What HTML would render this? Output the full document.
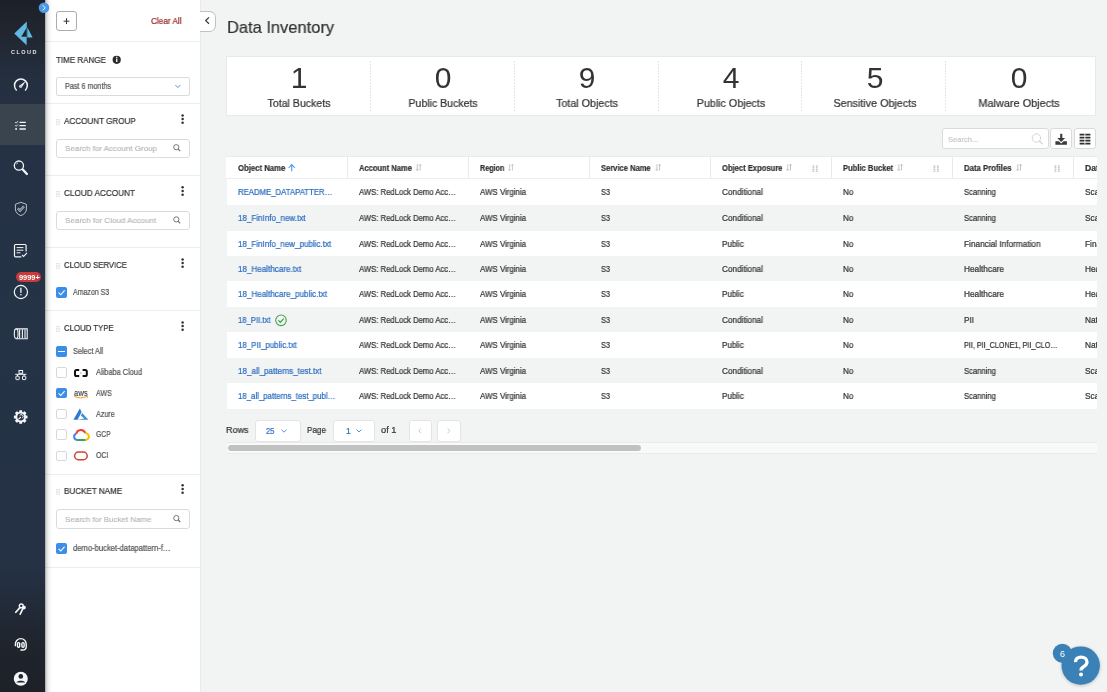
<!DOCTYPE html><html><head><meta charset="utf-8"><style>
*{box-sizing:border-box;margin:0;padding:0}
html,body{width:1107px;height:692px;overflow:hidden;background:#f2f3f3;font-family:"Liberation Sans",sans-serif;color:#333}
.t{position:absolute;line-height:1;white-space:nowrap;-webkit-text-stroke:0.22px currentColor;will-change:transform}
.r{position:absolute}
svg{position:absolute;overflow:visible}
.ic{display:inline-block;position:relative;vertical-align:baseline}
.ic svg{position:absolute;left:0;top:0}
</style></head><body>
<div class="r" style="left:0px;top:0px;width:45.00px;height:692.00px;background:linear-gradient(180deg,#1d2028 0px,#20262f 30px,#242f40 80px,#253245 150px,#253347 330px,#253246 560px,#222b39 605px,#1f242d 645px,#1d2027 692px)"></div>
<div class="r" style="left:0px;top:104.2px;width:45.00px;height:41.30px;background:#39444f"></div>
<svg style="left:0;top:0" width="45" height="60" viewBox="0 0 45 60">
<polygon points="14.3,33.4 26.8,21.6 26.6,45.2" fill="#63b8e3"/>
<polygon points="27.3,27.2 32.6,37.6 27.3,37.6" fill="#63b8e3"/>
<polygon points="21.3,36.8 26.6,27.8 26.6,36.8" fill="#1f242c"/>
</svg>
<div class="t" style="left:10.90px;top:50.23px;font-size:5.5px;font-weight:bold;color:#e6e8ea;letter-spacing:1.45px;-webkit-text-stroke:0">CLOUD</div>
<svg style="left:0;top:0" width="45" height="692">
<g fill="none" stroke="#f4f6f8" stroke-width="1.5" stroke-linecap="round">
 <path d="M16.3,89.9 A6.4,6.4 0 1 1 25.5,89.9"/>
</g>
<g stroke="#243042" stroke-width="0.9"><path d="M20.9,80.4 V81.4 M16.6,83.2 L17.4,83.7"/></g>
<polygon points="25.8,80.9 21.6,87.4 19.6,85.4" fill="#f4f6f8"/>
<circle cx="20.6" cy="86.4" r="1.4" fill="#f4f6f8"/>
<circle cx="21.0" cy="85.9" r="0.5" fill="#243042"/>
<g fill="none" stroke="#f4f6f8" stroke-width="1.3">
 <path d="M19.5,122.4 H25.8 M19.5,125.7 H25.8 M19.5,129.0 H25.8"/>
 <path d="M15.2,122.0 l1.0,1.1 l1.7,-1.9 M15.2,125.3 l1.0,1.1 l1.7,-1.9" stroke-width="0.9"/>
</g>
<rect x="15.2" y="128.2" width="1.8" height="1.6" fill="#f4f6f8"/>
<g fill="none" stroke="#f4f6f8">
 <circle cx="18.9" cy="165.6" r="4.6" stroke-width="1.3"/>
 <path d="M23.0,169.8 L26.9,174.0" stroke-width="2.3" stroke-linecap="round"/>
 <path d="M16.4,164.4 A2.8,2.8 0 0 1 18.2,162.6" stroke-width="0.7"/>
</g>
<g fill="none" stroke="#b9c0ca" stroke-width="1.0">
 <path d="M20.9,202.3 L26.4,204.3 V209 C26.4,212.3 24.0,214.5 20.9,215.6 C17.8,214.5 15.4,212.3 15.4,209 V204.3 Z"/>
 <path d="M17.8,208.4 L20.0,210.6 L24.0,206.4" stroke-width="2.3"/>
 <path d="M17.8,208.4 L20.0,210.6 L24.0,206.4" stroke="#253245" stroke-width="0.8"/>
</g>
<g fill="none" stroke="#f4f6f8" stroke-width="1.2">
 <path d="M21.4,256.9 H15.6 Q14.5,256.9 14.5,255.8 V245.6 Q14.5,244.5 15.6,244.5 H25.0 Q26.1,244.5 26.1,245.6 V251.6"/>
 <path d="M16.6,247.6 H23.4 M16.6,250.2 H23.4 M16.6,252.8 H20.4" stroke-width="1.0"/>
 <path d="M22.0,254.8 L23.6,256.4 L27.0,252.9" stroke-width="1.1"/>
</g>
<g fill="none" stroke="#f4f6f8" stroke-width="1.2">
 <circle cx="20.9" cy="292.0" r="6.6"/>
</g>
<rect x="20.25" y="287.7" width="1.3" height="5.2" fill="#f4f6f8"/>
<rect x="20.25" y="294.0" width="1.3" height="1.3" fill="#f4f6f8"/>
<g fill="none" stroke="#f4f6f8" stroke-width="1.1">
 <path d="M16.4,328.9 H27.2 V338.7 H16.4"/>
 <ellipse cx="16.2" cy="333.8" rx="1.9" ry="4.9"/>
 <path d="M19.6,329.6 V338 M22.4,329.6 V338 M25.0,329.6 V338"/>
</g>
<g fill="none" stroke="#f4f6f8" stroke-width="1.0">
 <rect x="19.0" y="370.5" width="3.6" height="2.8"/>
 <rect x="15.9" y="376.2" width="3.3" height="3.4" rx="0.5"/>
 <rect x="22.5" y="376.2" width="3.3" height="3.4" rx="0.5"/>
 <path d="M20.8,373.3 V374.3 M15.2,374.3 H26.4 M17.5,374.3 V376.2 M24.1,374.3 V376.2"/>
</g>
<g fill="#f4f6f8">
 <circle cx="20.7" cy="417.0" r="5.3"/>
 <g transform="translate(20.7,417.0)">
  <rect x="-1.5" y="-6.8" width="3" height="13.6" rx="0.6"/>
  <rect x="-1.5" y="-6.8" width="3" height="13.6" rx="0.6" transform="rotate(45)"/>
  <rect x="-1.5" y="-6.8" width="3" height="13.6" rx="0.6" transform="rotate(90)"/>
  <rect x="-1.5" y="-6.8" width="3" height="13.6" rx="0.6" transform="rotate(135)"/>
 </g>
 <circle cx="20.7" cy="417.0" r="3.4" fill="#253347"/>
 <path d="M18.4,419.4 L20.8,417.0" stroke="#f4f6f8" stroke-width="1.2"/>
 <path d="M19.6,415.6 A1.9,1.9 0 1 1 22.2,418.2" fill="none" stroke="#f4f6f8" stroke-width="1.0"/>
</g>
<circle cx="23.8" cy="607.6" r="2.0" fill="#f4f6f8"/>
<g fill="none" stroke="#f4f6f8" stroke-width="1.7" stroke-linecap="round">
 <circle cx="21.3" cy="605.9" r="1.9" stroke-width="1.5"/>
 <path d="M19.9,607.6 L15.8,612.3 M22.6,609.2 L20.2,614.2"/>
</g>
<circle cx="21.3" cy="605.9" r="0.9" fill="#1f252e"/>
<g fill="none" stroke="#f4f6f8" stroke-width="1.4">
 <path d="M15.4,646.2 V644.0 A5.4,5.4 0 0 1 26.2,644.0 V647.0 C26.2,649.2 25,650 22.4,650 H20.4"/>
 <rect x="17.5" y="642.6" width="2.2" height="4.6" rx="1"/>
 <rect x="21.9" y="642.6" width="2.2" height="4.6" rx="1"/>
</g>
<circle cx="20.8" cy="678.7" r="7" fill="#f4f6f8"/>
<circle cx="20.8" cy="676.4" r="2.3" fill="#1f232c"/>
<path d="M16.4,682.6 C17.4,680.2 24.2,680.2 25.2,682.6 Z" fill="#1f232c"/>
</svg>
<div class="r" style="left:16.1px;top:271.9px;width:25.30px;height:10.20px;background:#c93b3b;border-radius:5px"></div>
<div class="t" style="left:18.50px;top:273.78px;font-size:7.2px;font-weight:bold;transform:scaleX(1.0286);transform-origin:0 0;color:#fff;-webkit-text-stroke:0">9999+</div>
<div class="r" style="left:45px;top:0px;width:156.00px;height:692.00px;background:#fff;border-right:1px solid #e9ebeb"></div>
<div class="r" style="left:56.3px;top:10.8px;width:20.50px;height:20.70px;border:1px solid #a9adad;border-radius:3px;background:#fff"></div>
<svg style="left:0;top:0" width="200" height="40"><path d="M66.5,18.3 V24.1 M63.6,21.2 H69.4" stroke="#333" stroke-width="1"/></svg>
<div class="t" style="left:151.00px;top:17.42px;font-size:8.8px;transform:scaleX(0.9333);transform-origin:0 0;color:#9a2a2a">Clear All</div>
<div class="r" style="left:200px;top:10.5px;width:15.80px;height:21.10px;border:1px solid #bfc2c2;border-left:none;border-radius:0 6.5px 6.5px 0;background:#fff"></div>
<svg style="left:0;top:0" width="230" height="40"><path d="M209.0,17.4 L205.7,20.6 L209.0,23.8" fill="none" stroke="#333" stroke-width="1.2"/></svg>
<div class="r" style="left:45px;top:41px;width:155.00px;height:1.00px;background:#eceeee"></div>
<div class="t" style="left:56.30px;top:55.95px;font-size:9.0px;transform:scaleX(0.8911);transform-origin:0 0;color:#333">TIME RANGE</div>
<svg style="left:0;top:0" width="200" height="100"><circle cx="116.7" cy="59.8" r="4.1" fill="#2b2b2b"/><rect x="116.1" y="58.6" width="1.3" height="3.4" fill="#fff"/><rect x="116.1" y="56.8" width="1.3" height="1.2" fill="#fff"/></svg>
<div class="r" style="left:56.3px;top:77.2px;width:133.40px;height:18.60px;border:1px solid #d9dcdc;border-radius:2px;background:#fff"></div>
<div class="t" style="left:64.70px;top:82.63px;font-size:8.2px;transform:scaleX(0.8792);transform-origin:0 0;color:#555">Past 6 months</div>
<svg style="left:0;top:0" width="200" height="100"><path d="M175.4,85 L177.9,87.6 L180.4,85" fill="none" stroke="#3f86d9" stroke-width="0.9"/></svg>
<div class="r" style="left:45px;top:103px;width:155.00px;height:1.00px;background:#eceeee"></div>
<div class="t" style="left:63.80px;top:117.05px;font-size:9.0px;transform:scaleX(0.9000);transform-origin:0 0;color:#333">ACCOUNT GROUP</div><svg style="left:0;top:0" width="200" height="692"><rect x="56.4" y="119.10" width="1.0" height="1.0" fill="#c8c8c8"/><rect x="56.4" y="120.70" width="1.0" height="1.0" fill="#c8c8c8"/><rect x="56.4" y="122.30" width="1.0" height="1.0" fill="#c8c8c8"/><rect x="56.4" y="123.90" width="1.0" height="1.0" fill="#c8c8c8"/><rect x="58.6" y="119.10" width="1.0" height="1.0" fill="#c8c8c8"/><rect x="58.6" y="120.70" width="1.0" height="1.0" fill="#c8c8c8"/><rect x="58.6" y="122.30" width="1.0" height="1.0" fill="#c8c8c8"/><rect x="58.6" y="123.90" width="1.0" height="1.0" fill="#c8c8c8"/></svg><svg style="left:0;top:0" width="200" height="692"><circle cx="182.6" cy="115.40" r="1.25" fill="#333"/><circle cx="182.6" cy="119.10" r="1.25" fill="#333"/><circle cx="182.6" cy="122.80" r="1.25" fill="#333"/></svg>
<div class="r" style="left:56.3px;top:138.5px;width:133.40px;height:19.20px;border:1px solid #d9dcdc;border-radius:3px;background:#fff"></div><div class="t" style="left:64.60px;top:145.02px;font-size:8.1px;transform:scaleX(0.9862);transform-origin:0 0;color:#b8bbbb">Search for Account Group</div><svg style="left:0;top:0" width="200" height="692"><circle cx="176.3" cy="147.20" r="2.6" fill="none" stroke="#666" stroke-width="0.9"/><path d="M178.2,149.10 L180.2,151.10" stroke="#666" stroke-width="1.1"/></svg>
<div class="r" style="left:45px;top:175px;width:155.00px;height:1.00px;background:#eceeee"></div>
<div class="t" style="left:63.80px;top:188.95px;font-size:9.0px;transform:scaleX(0.9103);transform-origin:0 0;color:#333">CLOUD ACCOUNT</div><svg style="left:0;top:0" width="200" height="692"><rect x="56.4" y="191.00" width="1.0" height="1.0" fill="#c8c8c8"/><rect x="56.4" y="192.60" width="1.0" height="1.0" fill="#c8c8c8"/><rect x="56.4" y="194.20" width="1.0" height="1.0" fill="#c8c8c8"/><rect x="56.4" y="195.80" width="1.0" height="1.0" fill="#c8c8c8"/><rect x="58.6" y="191.00" width="1.0" height="1.0" fill="#c8c8c8"/><rect x="58.6" y="192.60" width="1.0" height="1.0" fill="#c8c8c8"/><rect x="58.6" y="194.20" width="1.0" height="1.0" fill="#c8c8c8"/><rect x="58.6" y="195.80" width="1.0" height="1.0" fill="#c8c8c8"/></svg><svg style="left:0;top:0" width="200" height="692"><circle cx="182.6" cy="187.30" r="1.25" fill="#333"/><circle cx="182.6" cy="191.00" r="1.25" fill="#333"/><circle cx="182.6" cy="194.70" r="1.25" fill="#333"/></svg>
<div class="r" style="left:56.3px;top:210.7px;width:133.40px;height:19.20px;border:1px solid #d9dcdc;border-radius:3px;background:#fff"></div><div class="t" style="left:64.60px;top:217.22px;font-size:8.1px;transform:scaleX(0.9935);transform-origin:0 0;color:#b8bbbb">Search for Cloud Account</div><svg style="left:0;top:0" width="200" height="692"><circle cx="176.3" cy="219.40" r="2.6" fill="none" stroke="#666" stroke-width="0.9"/><path d="M178.2,221.30 L180.2,223.30" stroke="#666" stroke-width="1.1"/></svg>
<div class="r" style="left:45px;top:247px;width:155.00px;height:1.00px;background:#eceeee"></div>
<div class="t" style="left:63.80px;top:261.05px;font-size:9.0px;transform:scaleX(0.8581);transform-origin:0 0;color:#333">CLOUD SERVICE</div><svg style="left:0;top:0" width="200" height="692"><rect x="56.4" y="263.10" width="1.0" height="1.0" fill="#c8c8c8"/><rect x="56.4" y="264.70" width="1.0" height="1.0" fill="#c8c8c8"/><rect x="56.4" y="266.30" width="1.0" height="1.0" fill="#c8c8c8"/><rect x="56.4" y="267.90" width="1.0" height="1.0" fill="#c8c8c8"/><rect x="58.6" y="263.10" width="1.0" height="1.0" fill="#c8c8c8"/><rect x="58.6" y="264.70" width="1.0" height="1.0" fill="#c8c8c8"/><rect x="58.6" y="266.30" width="1.0" height="1.0" fill="#c8c8c8"/><rect x="58.6" y="267.90" width="1.0" height="1.0" fill="#c8c8c8"/></svg><svg style="left:0;top:0" width="200" height="692"><circle cx="182.6" cy="259.40" r="1.25" fill="#333"/><circle cx="182.6" cy="263.10" r="1.25" fill="#333"/><circle cx="182.6" cy="266.80" r="1.25" fill="#333"/></svg>
<div class="r" style="left:56.1px;top:287px;width:10.90px;height:10.80px;background:#3b8ee8;border-radius:2px"></div><svg style="left:0;top:0" width="200" height="692"><path d="M58.6,292.60 L60.8,294.80 L64.6,290.40" fill="none" stroke="#fff" stroke-width="1.1"/></svg>
<div class="t" style="left:72.90px;top:289.03px;font-size:8.2px;transform:scaleX(0.8558);transform-origin:0 0;color:#555">Amazon S3</div>
<div class="r" style="left:45px;top:310px;width:155.00px;height:1.00px;background:#eceeee"></div>
<div class="t" style="left:63.80px;top:324.05px;font-size:9.0px;transform:scaleX(0.8672);transform-origin:0 0;color:#333">CLOUD TYPE</div><svg style="left:0;top:0" width="200" height="692"><rect x="56.4" y="326.10" width="1.0" height="1.0" fill="#c8c8c8"/><rect x="56.4" y="327.70" width="1.0" height="1.0" fill="#c8c8c8"/><rect x="56.4" y="329.30" width="1.0" height="1.0" fill="#c8c8c8"/><rect x="56.4" y="330.90" width="1.0" height="1.0" fill="#c8c8c8"/><rect x="58.6" y="326.10" width="1.0" height="1.0" fill="#c8c8c8"/><rect x="58.6" y="327.70" width="1.0" height="1.0" fill="#c8c8c8"/><rect x="58.6" y="329.30" width="1.0" height="1.0" fill="#c8c8c8"/><rect x="58.6" y="330.90" width="1.0" height="1.0" fill="#c8c8c8"/></svg><svg style="left:0;top:0" width="200" height="692"><circle cx="182.6" cy="322.40" r="1.25" fill="#333"/><circle cx="182.6" cy="326.10" r="1.25" fill="#333"/><circle cx="182.6" cy="329.80" r="1.25" fill="#333"/></svg>
<div class="r" style="left:56.1px;top:346.3px;width:10.90px;height:10.80px;background:#3b8ee8;border-radius:2px"></div><div class="r" style="left:58.4px;top:351.2px;width:6.30px;height:1.10px;background:#fff"></div>
<div class="t" style="left:72.90px;top:348.23px;font-size:8.2px;transform:scaleX(0.8971);transform-origin:0 0;color:#555">Select All</div>
<div class="r" style="left:56.1px;top:367.1px;width:10.90px;height:10.80px;border:1px solid #d6d9d9;border-radius:2px;background:#fff"></div>
<div class="t" style="left:96.30px;top:369.03px;font-size:8.2px;transform:scaleX(0.9039);transform-origin:0 0;color:#555">Alibaba Cloud</div>
<div class="r" style="left:56.1px;top:387.7px;width:10.90px;height:10.80px;background:#3b8ee8;border-radius:2px"></div><svg style="left:0;top:0" width="200" height="692"><path d="M58.6,393.30 L60.8,395.50 L64.6,391.10" fill="none" stroke="#fff" stroke-width="1.1"/></svg>
<div class="t" style="left:96.30px;top:389.63px;font-size:8.2px;transform:scaleX(0.8579);transform-origin:0 0;color:#555">AWS</div>
<div class="r" style="left:56.1px;top:408.6px;width:10.90px;height:10.80px;border:1px solid #d6d9d9;border-radius:2px;background:#fff"></div>
<div class="t" style="left:96.30px;top:410.53px;font-size:8.2px;transform:scaleX(0.8773);transform-origin:0 0;color:#555">Azure</div>
<div class="r" style="left:56.1px;top:429.4px;width:10.90px;height:10.80px;border:1px solid #d6d9d9;border-radius:2px;background:#fff"></div>
<div class="t" style="left:96.30px;top:431.33px;font-size:8.2px;transform:scaleX(0.8278);transform-origin:0 0;color:#555">GCP</div>
<div class="r" style="left:56.1px;top:450.5px;width:10.90px;height:10.80px;border:1px solid #d6d9d9;border-radius:2px;background:#fff"></div>
<div class="t" style="left:96.30px;top:452.43px;font-size:8.2px;transform:scaleX(0.8600);transform-origin:0 0;color:#555">OCI</div>
<svg style="left:0;top:0" width="200" height="692"><path d="M79.2,370.00 H76.6 Q75.0,370.00 75.0,371.60 V374.40 Q75.0,376.00 76.6,376.00 H79.2 M82.6,370.00 H85.2 Q86.8,370.00 86.8,371.60 V374.40 Q86.8,376.00 85.2,376.00 H82.6" fill="none" stroke="#111" stroke-width="2.0"/><path d="M80.0,373.00 H81.8" stroke="#777" stroke-width="0.6"/></svg>
<div class="t" style="left:73.80px;top:387.71px;font-size:9.4px;transform:scaleX(0.8235);transform-origin:0 0;color:#333;-webkit-text-stroke:0.1px #333">aws</div>
<svg style="left:0;top:0" width="200" height="692"><path d="M74.4,396.70 Q80.5,399.30 87.4,396.50" fill="none" stroke="#f29b1d" stroke-width="1.0"/><path d="M85.8,395.90 L87.8,396.30 L87.2,398.10" fill="none" stroke="#f29b1d" stroke-width="0.8"/></svg>
<svg style="left:0;top:0" width="200" height="692"><path d="M79.8,408.40 L73.4,419.80 H77.6 L81.6,412.00 Z" fill="#2f7ad0"/><path d="M82.2,413.00 L88.4,419.80 H77.4 L84.2,418.40 L80.8,415.40 Z" fill="#3b8fdc"/></svg>
<svg style="left:0;top:0" width="200" height="692"><path d="M77.0,440.00 A3.2,3.2 0 0 1 76.2,433.80" fill="none" stroke="#4285f4" stroke-width="2"/><path d="M76.2,433.80 A4.8,4.8 0 0 1 85.4,433.20" fill="none" stroke="#ea4335" stroke-width="2"/><path d="M85.4,433.20 A3.4,3.4 0 0 1 85.6,440.00" fill="none" stroke="#fbbc04" stroke-width="2"/><path d="M85.6,440.00 H77.0" fill="none" stroke="#34a853" stroke-width="2"/></svg>
<svg style="left:0;top:0" width="200" height="692"><rect x="74.6" y="452.10" width="12.6" height="7.6" rx="3.8" fill="none" stroke="#c74634" stroke-width="1.5"/></svg>
<div class="r" style="left:45px;top:473.5px;width:155.00px;height:1.00px;background:#eceeee"></div>
<div class="t" style="left:63.80px;top:486.95px;font-size:9.0px;transform:scaleX(0.8985);transform-origin:0 0;color:#333">BUCKET NAME</div><svg style="left:0;top:0" width="200" height="692"><rect x="56.4" y="489.00" width="1.0" height="1.0" fill="#c8c8c8"/><rect x="56.4" y="490.60" width="1.0" height="1.0" fill="#c8c8c8"/><rect x="56.4" y="492.20" width="1.0" height="1.0" fill="#c8c8c8"/><rect x="56.4" y="493.80" width="1.0" height="1.0" fill="#c8c8c8"/><rect x="58.6" y="489.00" width="1.0" height="1.0" fill="#c8c8c8"/><rect x="58.6" y="490.60" width="1.0" height="1.0" fill="#c8c8c8"/><rect x="58.6" y="492.20" width="1.0" height="1.0" fill="#c8c8c8"/><rect x="58.6" y="493.80" width="1.0" height="1.0" fill="#c8c8c8"/></svg><svg style="left:0;top:0" width="200" height="692"><circle cx="182.6" cy="485.30" r="1.25" fill="#333"/><circle cx="182.6" cy="489.00" r="1.25" fill="#333"/><circle cx="182.6" cy="492.70" r="1.25" fill="#333"/></svg>
<div class="r" style="left:56.3px;top:509.4px;width:133.40px;height:19.20px;border:1px solid #d9dcdc;border-radius:3px;background:#fff"></div><div class="t" style="left:64.60px;top:515.91px;font-size:8.1px;transform:scaleX(0.9807);transform-origin:0 0;color:#b8bbbb">Search for Bucket Name</div><svg style="left:0;top:0" width="200" height="692"><circle cx="176.3" cy="518.10" r="2.6" fill="none" stroke="#666" stroke-width="0.9"/><path d="M178.2,520.00 L180.2,522.00" stroke="#666" stroke-width="1.1"/></svg>
<div class="r" style="left:56.1px;top:543.2px;width:10.90px;height:10.80px;background:#3b8ee8;border-radius:2px"></div><svg style="left:0;top:0" width="200" height="692"><path d="M58.6,548.80 L60.8,551.00 L64.6,546.60" fill="none" stroke="#fff" stroke-width="1.1"/></svg>
<div class="t" style="left:72.90px;top:545.23px;font-size:8.2px;transform:scaleX(0.9317);transform-origin:0 0;color:#555">demo-bucket-datapattern-f…</div>
<div class="r" style="left:45px;top:566.5px;width:155.00px;height:1.00px;background:#eceeee"></div>
<div class="r" style="left:45px;top:0px;width:7.00px;height:692.00px;background:linear-gradient(90deg,rgba(0,0,0,0.38),rgba(0,0,0,0.16) 20%,rgba(0,0,0,0.05) 55%,rgba(0,0,0,0))"></div>
<svg style="left:0;top:0" width="60" height="20"><circle cx="44" cy="7.8" r="5.3" fill="#4a98e6"/>
<path d="M42.8,5.2 L45.2,7.8 L42.8,10.4" fill="none" stroke="#fff" stroke-width="0.9"/></svg>
<div class="t" style="left:226.50px;top:18.95px;font-size:17px;transform:scaleX(0.9685);transform-origin:0 0;color:#333">Data Inventory</div>
<div class="r" style="left:225.6px;top:55.5px;width:870.60px;height:60.90px;background:#fff;border:1px solid #e8eaea"></div>
<div class="t" style="left:148.50px;width:300px;text-align:center;top:63.30px;font-size:30px;color:#333;-webkit-text-stroke:0">1</div>
<div class="t" style="left:148.50px;width:300px;text-align:center;top:97.85px;font-size:11px;transform:scaleX(0.9621);transform-origin:50% 0;color:#333">Total Buckets</div>
<div class="t" style="left:292.50px;width:300px;text-align:center;top:63.30px;font-size:30px;color:#333;-webkit-text-stroke:0">0</div>
<div class="t" style="left:292.50px;width:300px;text-align:center;top:97.85px;font-size:11px;transform:scaleX(0.9575);transform-origin:50% 0;color:#333">Public Buckets</div>
<div class="r" style="left:369.70000000000005px;top:61px;width:1.00px;height:50.00px;background:repeating-linear-gradient(180deg,#e4e6e6 0 1.6px,rgba(255,255,255,0) 1.6px 3px)"></div>
<div class="t" style="left:436.50px;width:300px;text-align:center;top:63.30px;font-size:30px;color:#333;-webkit-text-stroke:0">9</div>
<div class="t" style="left:436.50px;width:300px;text-align:center;top:97.85px;font-size:11px;transform:scaleX(0.9750);transform-origin:50% 0;color:#333">Total Objects</div>
<div class="r" style="left:513.6px;top:61px;width:1.00px;height:50.00px;background:repeating-linear-gradient(180deg,#e4e6e6 0 1.6px,rgba(255,255,255,0) 1.6px 3px)"></div>
<div class="t" style="left:580.50px;width:300px;text-align:center;top:63.30px;font-size:30px;color:#333;-webkit-text-stroke:0">4</div>
<div class="t" style="left:580.50px;width:300px;text-align:center;top:97.85px;font-size:11px;transform:scaleX(0.9732);transform-origin:50% 0;color:#333">Public Objects</div>
<div class="r" style="left:657.5px;top:61px;width:1.00px;height:50.00px;background:repeating-linear-gradient(180deg,#e4e6e6 0 1.6px,rgba(255,255,255,0) 1.6px 3px)"></div>
<div class="t" style="left:724.50px;width:300px;text-align:center;top:63.30px;font-size:30px;color:#333;-webkit-text-stroke:0">5</div>
<div class="t" style="left:724.50px;width:300px;text-align:center;top:97.85px;font-size:11px;transform:scaleX(0.9776);transform-origin:50% 0;color:#333">Sensitive Objects</div>
<div class="r" style="left:801.4000000000001px;top:61px;width:1.00px;height:50.00px;background:repeating-linear-gradient(180deg,#e4e6e6 0 1.6px,rgba(255,255,255,0) 1.6px 3px)"></div>
<div class="t" style="left:868.50px;width:300px;text-align:center;top:63.30px;font-size:30px;color:#333;-webkit-text-stroke:0">0</div>
<div class="t" style="left:868.50px;width:300px;text-align:center;top:97.85px;font-size:11px;transform:scaleX(0.9890);transform-origin:50% 0;color:#333">Malware Objects</div>
<div class="r" style="left:945.3px;top:61px;width:1.00px;height:50.00px;background:repeating-linear-gradient(180deg,#e4e6e6 0 1.6px,rgba(255,255,255,0) 1.6px 3px)"></div>
<div class="r" style="left:942.2px;top:128.4px;width:106.40px;height:21.00px;background:#fff;border:1px solid #d9dbdb;border-radius:3px"></div>
<div class="t" style="left:947.80px;top:135.94px;font-size:7.6px;color:#c8cbcb">Search...</div>
<svg style="left:0;top:0" width="1107" height="692"><circle cx="1036.4" cy="138.0" r="4.2" fill="none" stroke="#d3d5d5" stroke-width="1"/><path d="M1039.4,141.0 L1042.6,144.2" stroke="#d3d5d5" stroke-width="1.3"/></svg>
<div class="r" style="left:1049.8px;top:128.4px;width:22.40px;height:21.00px;background:#fff;border:1px solid #d9dbdb;border-radius:3px"></div>
<div class="r" style="left:1073.8px;top:128.4px;width:22.60px;height:21.00px;background:#fff;border:1px solid #d9dbdb;border-radius:3px"></div>
<svg style="left:0;top:0" width="1107" height="692">
<rect x="1060.2" y="133.8" width="2.1" height="4.8" fill="#3a3a3a"/>
<polygon points="1057.3,138.0 1065.1,138.0 1061.2,142.0" fill="#3a3a3a"/>
<path d="M1055.4,141.2 H1058.8 L1061.2,143.4 L1063.6,141.2 H1066.9 V144.7 H1055.4 Z" fill="#3a3a3a"/>
<path d="M1079.6,134.6 H1090.4 M1079.6,137.6 H1090.4 M1079.6,140.6 H1090.4 M1079.6,143.6 H1090.4" stroke="#2e2e2e" stroke-width="1.6"/>
<path d="M1084.9,133.6 V144.6" stroke="#fff" stroke-width="0.9"/>
</svg>
<div class="r" style="left:226px;top:156px;width:871.00px;height:23.00px;background:#fff;border-top:1px solid #e9ebeb;border-bottom:1px solid #eceeee"></div>
<div class="r" style="left:346.7px;top:157px;width:1.00px;height:21.00px;background:#e9ebeb"></div>
<div class="r" style="left:467.7px;top:157px;width:1.00px;height:21.00px;background:#e9ebeb"></div>
<div class="r" style="left:588.7px;top:157px;width:1.00px;height:21.00px;background:#e9ebeb"></div>
<div class="r" style="left:709.7px;top:157px;width:1.00px;height:21.00px;background:#e9ebeb"></div>
<div class="r" style="left:830.7px;top:157px;width:1.00px;height:21.00px;background:#e9ebeb"></div>
<div class="r" style="left:951.7px;top:157px;width:1.00px;height:21.00px;background:#e9ebeb"></div>
<div class="r" style="left:1072.7px;top:157px;width:1.00px;height:21.00px;background:#e9ebeb"></div>
<div class="t" style="left:237.90px;top:164.19px;font-size:8.6px;font-weight:bold;transform:scaleX(0.9000);transform-origin:0 0;color:#333">Object Name<span class="ic" style="width:7.4px;height:7px;margin-left:3.6px"><svg width="8" height="8" style="top:0.2px"><path d="M3.7,7.2 V0.8 M0.4,3.9 L3.7,0.6 L7,3.9" fill="none" stroke="#4a98ee" stroke-width="1.15"/></svg></span></div>
<div class="t" style="left:358.90px;top:164.19px;font-size:8.6px;font-weight:bold;transform:scaleX(0.8787);transform-origin:0 0;color:#333">Account Name<span class="ic" style="width:6px;height:7px;margin-left:5.2px"><svg width="8" height="8" style="top:0.2px"><path d="M1.3,0.2 V6.6 M0,5.2 L1.3,6.6 L2.6,5.2 M4.5,6.6 V0.2 M3.2,1.6 L4.5,0.2 L5.8,1.6" fill="none" stroke="#b8baba" stroke-width="0.95"/></svg></span></div>
<div class="t" style="left:479.90px;top:164.19px;font-size:8.6px;font-weight:bold;transform:scaleX(0.8379);transform-origin:0 0;color:#333">Region<span class="ic" style="width:6px;height:7px;margin-left:5.2px"><svg width="8" height="8" style="top:0.2px"><path d="M1.3,0.2 V6.6 M0,5.2 L1.3,6.6 L2.6,5.2 M4.5,6.6 V0.2 M3.2,1.6 L4.5,0.2 L5.8,1.6" fill="none" stroke="#b8baba" stroke-width="0.95"/></svg></span></div>
<div class="t" style="left:600.90px;top:164.19px;font-size:8.6px;font-weight:bold;transform:scaleX(0.8807);transform-origin:0 0;color:#333">Service Name<span class="ic" style="width:6px;height:7px;margin-left:5.2px"><svg width="8" height="8" style="top:0.2px"><path d="M1.3,0.2 V6.6 M0,5.2 L1.3,6.6 L2.6,5.2 M4.5,6.6 V0.2 M3.2,1.6 L4.5,0.2 L5.8,1.6" fill="none" stroke="#b8baba" stroke-width="0.95"/></svg></span></div>
<div class="t" style="left:721.90px;top:164.19px;font-size:8.6px;font-weight:bold;transform:scaleX(0.8841);transform-origin:0 0;color:#333">Object Exposure<span class="ic" style="width:6px;height:7px;margin-left:5.2px"><svg width="8" height="8" style="top:0.2px"><path d="M1.3,0.2 V6.6 M0,5.2 L1.3,6.6 L2.6,5.2 M4.5,6.6 V0.2 M3.2,1.6 L4.5,0.2 L5.8,1.6" fill="none" stroke="#b8baba" stroke-width="0.95"/></svg></span></div>
<svg style="left:0;top:0" width="1107" height="692"><rect x="812.50" y="165.20" width="1.8" height="1.4" fill="#c6c8c8"/><rect x="812.50" y="167.00" width="1.8" height="1.4" fill="#c6c8c8"/><rect x="812.50" y="168.80" width="1.8" height="1.4" fill="#c6c8c8"/><rect x="812.50" y="170.60" width="1.8" height="1.4" fill="#c6c8c8"/><rect x="815.90" y="165.20" width="1.8" height="1.4" fill="#c6c8c8"/><rect x="815.90" y="167.00" width="1.8" height="1.4" fill="#c6c8c8"/><rect x="815.90" y="168.80" width="1.8" height="1.4" fill="#c6c8c8"/><rect x="815.90" y="170.60" width="1.8" height="1.4" fill="#c6c8c8"/></svg>
<div class="t" style="left:842.90px;top:164.19px;font-size:8.6px;font-weight:bold;transform:scaleX(0.8807);transform-origin:0 0;color:#333">Public Bucket<span class="ic" style="width:6px;height:7px;margin-left:5.2px"><svg width="8" height="8" style="top:0.2px"><path d="M1.3,0.2 V6.6 M0,5.2 L1.3,6.6 L2.6,5.2 M4.5,6.6 V0.2 M3.2,1.6 L4.5,0.2 L5.8,1.6" fill="none" stroke="#b8baba" stroke-width="0.95"/></svg></span></div>
<svg style="left:0;top:0" width="1107" height="692"><rect x="933.50" y="165.20" width="1.8" height="1.4" fill="#c6c8c8"/><rect x="933.50" y="167.00" width="1.8" height="1.4" fill="#c6c8c8"/><rect x="933.50" y="168.80" width="1.8" height="1.4" fill="#c6c8c8"/><rect x="933.50" y="170.60" width="1.8" height="1.4" fill="#c6c8c8"/><rect x="936.90" y="165.20" width="1.8" height="1.4" fill="#c6c8c8"/><rect x="936.90" y="167.00" width="1.8" height="1.4" fill="#c6c8c8"/><rect x="936.90" y="168.80" width="1.8" height="1.4" fill="#c6c8c8"/><rect x="936.90" y="170.60" width="1.8" height="1.4" fill="#c6c8c8"/></svg>
<div class="t" style="left:963.90px;top:164.19px;font-size:8.6px;font-weight:bold;transform:scaleX(0.9057);transform-origin:0 0;color:#333">Data Profiles<span class="ic" style="width:6px;height:7px;margin-left:5.2px"><svg width="8" height="8" style="top:0.2px"><path d="M1.3,0.2 V6.6 M0,5.2 L1.3,6.6 L2.6,5.2 M4.5,6.6 V0.2 M3.2,1.6 L4.5,0.2 L5.8,1.6" fill="none" stroke="#b8baba" stroke-width="0.95"/></svg></span></div>
<svg style="left:0;top:0" width="1107" height="692"><rect x="1054.50" y="165.20" width="1.8" height="1.4" fill="#c6c8c8"/><rect x="1054.50" y="167.00" width="1.8" height="1.4" fill="#c6c8c8"/><rect x="1054.50" y="168.80" width="1.8" height="1.4" fill="#c6c8c8"/><rect x="1054.50" y="170.60" width="1.8" height="1.4" fill="#c6c8c8"/><rect x="1057.90" y="165.20" width="1.8" height="1.4" fill="#c6c8c8"/><rect x="1057.90" y="167.00" width="1.8" height="1.4" fill="#c6c8c8"/><rect x="1057.90" y="168.80" width="1.8" height="1.4" fill="#c6c8c8"/><rect x="1057.90" y="170.60" width="1.8" height="1.4" fill="#c6c8c8"/></svg>
<div class="t" style="left:1084.90px;top:164.19px;font-size:8.6px;font-weight:bold;color:#333">Data Patterns</div>
<div class="r" style="left:226.5px;top:178.5px;width:870.50px;height:26.50px;background:#fff"></div>
<div class="t" style="left:237.80px;top:188.09px;font-size:8.3px;transform:scaleX(0.9360);transform-origin:0 0;color:#2b6cc0">README_DATAPATTER…</div>
<div class="t" style="left:358.80px;top:188.09px;font-size:8.3px;transform:scaleX(0.9279);transform-origin:0 0;color:#333">AWS: RedLock Demo Acc…</div>
<div class="t" style="left:479.80px;top:188.09px;font-size:8.3px;transform:scaleX(0.9510);transform-origin:0 0;color:#333">AWS Virginia</div>
<div class="t" style="left:600.80px;top:188.09px;font-size:8.3px;transform:scaleX(0.9000);transform-origin:0 0;color:#333">S3</div>
<div class="t" style="left:721.80px;top:188.09px;font-size:8.3px;transform:scaleX(0.9857);transform-origin:0 0;color:#333">Conditional</div>
<div class="t" style="left:842.80px;top:188.09px;font-size:8.3px;transform:scaleX(0.9727);transform-origin:0 0;color:#333">No</div>
<div class="t" style="left:963.80px;top:188.09px;font-size:8.3px;transform:scaleX(0.9200);transform-origin:0 0;color:#333">Scanning</div>
<div class="t" style="left:1084.80px;top:188.09px;font-size:8.3px;color:#333">Scanning</div>
<div class="t" style="left:237.80px;top:214.09px;font-size:8.3px;transform:scaleX(0.9700);transform-origin:0 0;color:#2b6cc0">18_FinInfo_new.txt</div>
<div class="t" style="left:358.80px;top:214.09px;font-size:8.3px;transform:scaleX(0.9279);transform-origin:0 0;color:#333">AWS: RedLock Demo Acc…</div>
<div class="t" style="left:479.80px;top:214.09px;font-size:8.3px;transform:scaleX(0.9510);transform-origin:0 0;color:#333">AWS Virginia</div>
<div class="t" style="left:600.80px;top:214.09px;font-size:8.3px;transform:scaleX(0.9000);transform-origin:0 0;color:#333">S3</div>
<div class="t" style="left:721.80px;top:214.09px;font-size:8.3px;transform:scaleX(0.9857);transform-origin:0 0;color:#333">Conditional</div>
<div class="t" style="left:842.80px;top:214.09px;font-size:8.3px;transform:scaleX(0.9727);transform-origin:0 0;color:#333">No</div>
<div class="t" style="left:963.80px;top:214.09px;font-size:8.3px;transform:scaleX(0.9200);transform-origin:0 0;color:#333">Scanning</div>
<div class="t" style="left:1084.80px;top:214.09px;font-size:8.3px;color:#333">Scanning</div>
<div class="r" style="left:226.5px;top:230.5px;width:870.50px;height:25.50px;background:#fff"></div>
<div class="t" style="left:237.80px;top:239.59px;font-size:8.3px;transform:scaleX(0.9660);transform-origin:0 0;color:#2b6cc0">18_FinInfo_new_public.txt</div>
<div class="t" style="left:358.80px;top:239.59px;font-size:8.3px;transform:scaleX(0.9279);transform-origin:0 0;color:#333">AWS: RedLock Demo Acc…</div>
<div class="t" style="left:479.80px;top:239.59px;font-size:8.3px;transform:scaleX(0.9510);transform-origin:0 0;color:#333">AWS Virginia</div>
<div class="t" style="left:600.80px;top:239.59px;font-size:8.3px;transform:scaleX(0.9000);transform-origin:0 0;color:#333">S3</div>
<div class="t" style="left:721.80px;top:239.59px;font-size:8.3px;transform:scaleX(0.9652);transform-origin:0 0;color:#333">Public</div>
<div class="t" style="left:842.80px;top:239.59px;font-size:8.3px;transform:scaleX(0.9727);transform-origin:0 0;color:#333">No</div>
<div class="t" style="left:963.80px;top:239.59px;font-size:8.3px;transform:scaleX(0.9935);transform-origin:0 0;color:#333">Financial Information</div>
<div class="t" style="left:1084.80px;top:239.59px;font-size:8.3px;color:#333">Financial Information</div>
<div class="t" style="left:237.80px;top:264.99px;font-size:8.3px;transform:scaleX(0.9727);transform-origin:0 0;color:#2b6cc0">18_Healthcare.txt</div>
<div class="t" style="left:358.80px;top:264.99px;font-size:8.3px;transform:scaleX(0.9279);transform-origin:0 0;color:#333">AWS: RedLock Demo Acc…</div>
<div class="t" style="left:479.80px;top:264.99px;font-size:8.3px;transform:scaleX(0.9510);transform-origin:0 0;color:#333">AWS Virginia</div>
<div class="t" style="left:600.80px;top:264.99px;font-size:8.3px;transform:scaleX(0.9000);transform-origin:0 0;color:#333">S3</div>
<div class="t" style="left:721.80px;top:264.99px;font-size:8.3px;transform:scaleX(0.9857);transform-origin:0 0;color:#333">Conditional</div>
<div class="t" style="left:842.80px;top:264.99px;font-size:8.3px;transform:scaleX(0.9727);transform-origin:0 0;color:#333">No</div>
<div class="t" style="left:963.80px;top:264.99px;font-size:8.3px;transform:scaleX(0.9950);transform-origin:0 0;color:#333">Healthcare</div>
<div class="t" style="left:1084.80px;top:264.99px;font-size:8.3px;color:#333">Healthcare</div>
<div class="r" style="left:226.5px;top:281.3px;width:870.50px;height:25.60px;background:#fff"></div>
<div class="t" style="left:237.80px;top:290.44px;font-size:8.3px;transform:scaleX(0.9739);transform-origin:0 0;color:#2b6cc0">18_Healthcare_public.txt</div>
<div class="t" style="left:358.80px;top:290.44px;font-size:8.3px;transform:scaleX(0.9279);transform-origin:0 0;color:#333">AWS: RedLock Demo Acc…</div>
<div class="t" style="left:479.80px;top:290.44px;font-size:8.3px;transform:scaleX(0.9510);transform-origin:0 0;color:#333">AWS Virginia</div>
<div class="t" style="left:600.80px;top:290.44px;font-size:8.3px;transform:scaleX(0.9000);transform-origin:0 0;color:#333">S3</div>
<div class="t" style="left:721.80px;top:290.44px;font-size:8.3px;transform:scaleX(0.9652);transform-origin:0 0;color:#333">Public</div>
<div class="t" style="left:842.80px;top:290.44px;font-size:8.3px;transform:scaleX(0.9727);transform-origin:0 0;color:#333">No</div>
<div class="t" style="left:963.80px;top:290.44px;font-size:8.3px;transform:scaleX(0.9950);transform-origin:0 0;color:#333">Healthcare</div>
<div class="t" style="left:1084.80px;top:290.44px;font-size:8.3px;color:#333">Healthcare</div>
<div class="t" style="left:237.80px;top:315.94px;font-size:8.3px;transform:scaleX(0.9278);transform-origin:0 0;color:#2b6cc0">18_PII.txt</div>
<div class="t" style="left:358.80px;top:315.94px;font-size:8.3px;transform:scaleX(0.9279);transform-origin:0 0;color:#333">AWS: RedLock Demo Acc…</div>
<div class="t" style="left:479.80px;top:315.94px;font-size:8.3px;transform:scaleX(0.9510);transform-origin:0 0;color:#333">AWS Virginia</div>
<div class="t" style="left:600.80px;top:315.94px;font-size:8.3px;transform:scaleX(0.9000);transform-origin:0 0;color:#333">S3</div>
<div class="t" style="left:721.80px;top:315.94px;font-size:8.3px;transform:scaleX(0.9857);transform-origin:0 0;color:#333">Conditional</div>
<div class="t" style="left:842.80px;top:315.94px;font-size:8.3px;transform:scaleX(0.9727);transform-origin:0 0;color:#333">No</div>
<div class="t" style="left:963.80px;top:315.94px;font-size:8.3px;transform:scaleX(0.9800);transform-origin:0 0;color:#333">PII</div>
<div class="t" style="left:1084.80px;top:315.94px;font-size:8.3px;color:#333">National ID</div>
<div class="r" style="left:226.5px;top:332.3px;width:870.50px;height:25.50px;background:#fff"></div>
<div class="t" style="left:237.80px;top:341.39px;font-size:8.3px;transform:scaleX(0.9565);transform-origin:0 0;color:#2b6cc0">18_PII_public.txt</div>
<div class="t" style="left:358.80px;top:341.39px;font-size:8.3px;transform:scaleX(0.9279);transform-origin:0 0;color:#333">AWS: RedLock Demo Acc…</div>
<div class="t" style="left:479.80px;top:341.39px;font-size:8.3px;transform:scaleX(0.9510);transform-origin:0 0;color:#333">AWS Virginia</div>
<div class="t" style="left:600.80px;top:341.39px;font-size:8.3px;transform:scaleX(0.9000);transform-origin:0 0;color:#333">S3</div>
<div class="t" style="left:721.80px;top:341.39px;font-size:8.3px;transform:scaleX(0.9652);transform-origin:0 0;color:#333">Public</div>
<div class="t" style="left:842.80px;top:341.39px;font-size:8.3px;transform:scaleX(0.9727);transform-origin:0 0;color:#333">No</div>
<div class="t" style="left:963.80px;top:341.39px;font-size:8.3px;transform:scaleX(0.8701);transform-origin:0 0;color:#333">PII, PII_CLONE1, PII_CLO…</div>
<div class="t" style="left:1084.80px;top:341.39px;font-size:8.3px;color:#333">National ID</div>
<div class="t" style="left:237.80px;top:366.94px;font-size:8.3px;transform:scaleX(0.9733);transform-origin:0 0;color:#2b6cc0">18_all_patterns_test.txt</div>
<div class="t" style="left:358.80px;top:366.94px;font-size:8.3px;transform:scaleX(0.9279);transform-origin:0 0;color:#333">AWS: RedLock Demo Acc…</div>
<div class="t" style="left:479.80px;top:366.94px;font-size:8.3px;transform:scaleX(0.9510);transform-origin:0 0;color:#333">AWS Virginia</div>
<div class="t" style="left:600.80px;top:366.94px;font-size:8.3px;transform:scaleX(0.9000);transform-origin:0 0;color:#333">S3</div>
<div class="t" style="left:721.80px;top:366.94px;font-size:8.3px;transform:scaleX(0.9857);transform-origin:0 0;color:#333">Conditional</div>
<div class="t" style="left:842.80px;top:366.94px;font-size:8.3px;transform:scaleX(0.9727);transform-origin:0 0;color:#333">No</div>
<div class="t" style="left:963.80px;top:366.94px;font-size:8.3px;transform:scaleX(0.9200);transform-origin:0 0;color:#333">Scanning</div>
<div class="t" style="left:1084.80px;top:366.94px;font-size:8.3px;color:#333">Scanning</div>
<div class="r" style="left:226.5px;top:383.4px;width:870.50px;height:25.30px;background:#fff"></div>
<div class="t" style="left:237.80px;top:392.39px;font-size:8.3px;transform:scaleX(0.9427);transform-origin:0 0;color:#2b6cc0">18_all_patterns_test_publ…</div>
<div class="t" style="left:358.80px;top:392.39px;font-size:8.3px;transform:scaleX(0.9279);transform-origin:0 0;color:#333">AWS: RedLock Demo Acc…</div>
<div class="t" style="left:479.80px;top:392.39px;font-size:8.3px;transform:scaleX(0.9510);transform-origin:0 0;color:#333">AWS Virginia</div>
<div class="t" style="left:600.80px;top:392.39px;font-size:8.3px;transform:scaleX(0.9000);transform-origin:0 0;color:#333">S3</div>
<div class="t" style="left:721.80px;top:392.39px;font-size:8.3px;transform:scaleX(0.9652);transform-origin:0 0;color:#333">Public</div>
<div class="t" style="left:842.80px;top:392.39px;font-size:8.3px;transform:scaleX(0.9727);transform-origin:0 0;color:#333">No</div>
<div class="t" style="left:963.80px;top:392.39px;font-size:8.3px;transform:scaleX(0.9200);transform-origin:0 0;color:#333">Scanning</div>
<div class="t" style="left:1084.80px;top:392.39px;font-size:8.3px;color:#333">Scanning</div>
<div class="r" style="left:1097px;top:150px;width:10.00px;height:270.00px;background:#f2f3f3"></div>
<svg style="left:0;top:0" width="1107" height="692"><circle cx="281" cy="320.3" r="5.3" fill="none" stroke="#45a349" stroke-width="1.1"/><path d="M278.4,320.4 L280.3,322.3 L283.8,318.6" fill="none" stroke="#45a349" stroke-width="1.3"/></svg>
<div class="t" style="left:226.00px;top:426.10px;font-size:9.3px;transform:scaleX(0.9696);transform-origin:0 0;color:#333">Rows</div>
<div class="r" style="left:254.5px;top:420px;width:46.50px;height:21.60px;background:#fff;border:1px solid #e3e5e5;border-radius:3px"></div>
<div class="t" style="left:266.00px;top:427.19px;font-size:8.6px;transform:scaleX(0.8700);transform-origin:0 0;color:#2f6fc6">25</div>
<div class="t" style="left:307.30px;top:426.10px;font-size:9.3px;transform:scaleX(0.8773);transform-origin:0 0;color:#333">Page</div>
<div class="r" style="left:333px;top:420px;width:42.00px;height:21.60px;background:#fff;border:1px solid #e3e5e5;border-radius:3px"></div>
<div class="t" style="left:345.60px;top:427.19px;font-size:8.6px;color:#2f6fc6">1</div>
<div class="t" style="left:381.00px;top:426.10px;font-size:9.3px;color:#333">of 1</div>
<div class="r" style="left:408.5px;top:420px;width:23.10px;height:21.60px;background:#fff;border:1px solid #e3e5e5;border-radius:3px"></div>
<div class="r" style="left:437.2px;top:420px;width:23.60px;height:21.60px;background:#fff;border:1px solid #e3e5e5;border-radius:3px"></div>
<svg style="left:0;top:0" width="1107" height="692">
<path d="M281.4,429.6 L284,432.2 L286.6,429.6" fill="none" stroke="#3f86d9" stroke-width="0.9"/>
<path d="M356.6,429.6 L359,432 L361.4,429.6" fill="none" stroke="#3f86d9" stroke-width="0.9"/>
<path d="M421,428.4 L418.8,430.8 L421,433.2" fill="none" stroke="#bbb" stroke-width="0.8"/>
<path d="M447.6,428.4 L449.8,430.8 L447.6,433.2" fill="none" stroke="#bbb" stroke-width="0.8"/>
</svg>
<div class="r" style="left:226.5px;top:442px;width:870.50px;height:12.00px;background:#f9f9f9;border-top:1px solid #e9eaea;border-bottom:1px solid #e9eaea"></div>
<div class="r" style="left:228px;top:444.9px;width:413.00px;height:5.90px;background:#c1c1c1;border-radius:3px"></div>
<svg style="left:0;top:0" width="1107" height="692">
<defs><filter id="sh" x="-50%" y="-50%" width="200%" height="200%"><feGaussianBlur stdDeviation="1.5"/></filter></defs>
<circle cx="1080.8" cy="666.4" r="19.6" fill="rgba(0,0,0,0.18)" filter="url(#sh)"/>
<circle cx="1080.7" cy="665.6" r="19.2" fill="#3a81b7"/>
<circle cx="1062.4" cy="653.3" r="9.6" fill="#3a81b7"/>
</svg>
<svg style="left:0;top:0" width="1107" height="692"><path d="M1075.5,662.2 C1075.3,658.8 1077.8,657.1 1081.1,657.1 C1084.6,657.1 1087,659.2 1087,662 C1087,664.8 1085,665.8 1083.2,667 C1081.6,668 1081,669 1081,670.6" fill="none" stroke="#fff" stroke-width="3.3"/><circle cx="1081" cy="674.6" r="2.0" fill="#fff"/></svg>
<div class="t" style="left:1060.20px;top:649.95px;font-size:9px;color:#fff;-webkit-text-stroke:0">6</div>
</body></html>
